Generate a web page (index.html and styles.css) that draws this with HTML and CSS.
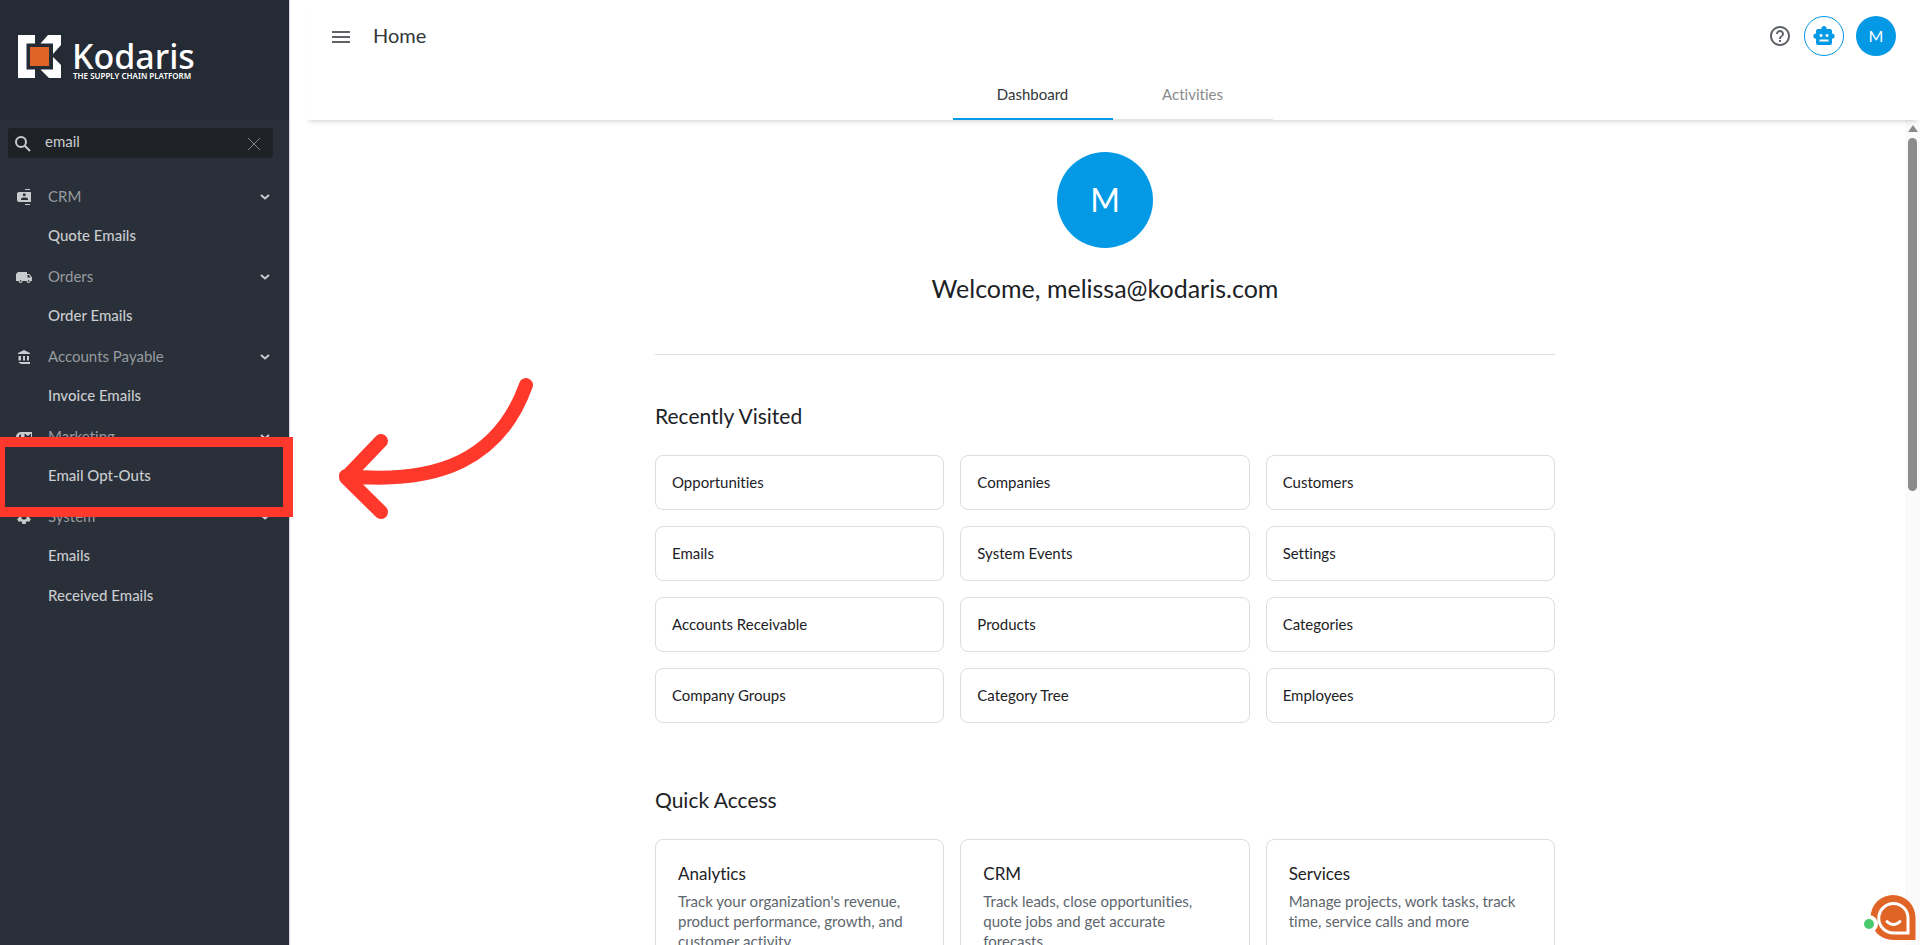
FILE: index.html
```
<!DOCTYPE html>
<html lang="en">
<head>
    <meta charset="UTF-8">
    <meta name="viewport" content="width=device-width, initial-scale=1.0">
    <title>Kodaris</title>
    <link rel="stylesheet" href="styles.css">
</head>
<body>
    <aside class="sidebar">
        <a href="#" class="logo" aria-label="Kodaris">
            <svg class="logo-mark" viewBox="0 0 43 43">
                <path fill="#fff" d="M0 0h17v8.500H8.500v26H17V43H0zM30 0h13v10l-8 9V8.500H22.500zM43 30v13H31L22.500 34.500H35V22z"/>
                <path fill="#df6426" d="M12 12h19v19H12z"/>
            </svg>
            <span class="logo-text">
                <span class="logo-name">Kodaris</span>
                <span class="logo-tag">THE SUPPLY CHAIN PLATFORM</span>
            </span>
        </a>

        <div class="search">
            <svg class="search-icon" viewBox="0 0 16 16"><circle cx="6" cy="6" r="5"/><path d="M9.500 9.500l5.500 5.500"/></svg>
            <input type="text" value="email" aria-label="Search menu">
            <button class="clear" aria-label="Clear"><svg viewBox="0 0 12 12"><path d="M0 0l12 12M12 0L0 12"/></svg></button>
        </div>

        <nav class="menu">
            <button class="group">
                <svg class="group-icon" viewBox="0 0 16 16"><path fill-rule="evenodd" d="M3 3h12v10H3a2 2 0 0 1-2-2V5a2 2 0 0 1 2-2zM7 4.500v2.500h2.500V4.500zM5 11h7V9.500L10 8.500H7L5 9.500zM9 0h5v1H9zM9 15h5v1H9z"/></svg>
                <span>CRM</span>
                <svg class="chevron" viewBox="0 0 8 6"><path d="M0 1l4 3.500L8 1"/></svg>
            </button>
            <a href="#" class="item">Quote Emails</a>

            <button class="group">
                <svg class="group-icon" viewBox="0 0 16 16"><path fill-rule="evenodd" d="M2 3h9v2h2.500L16 8.500V12h-1.500a2 2 0 0 1-4 0h-4a2 2 0 0 1-4 0H0V5zM11.500 6v2.500h3L13 6zM4.500 11.200a.8.8 0 1 0 .1 0zM12.500 11.200a.8.8 0 1 0 .1 0z"/></svg>
                <span>Orders</span>
                <svg class="chevron" viewBox="0 0 8 6"><path d="M0 1l4 3.500L8 1"/></svg>
            </button>
            <a href="#" class="item">Order Emails</a>

            <button class="group">
                <svg class="group-icon" viewBox="0 0 16 16"><path d="M8 1l6 3v1H2V4zM2.500 7H5v4.500H2.500zM7 7h2v4.500H7zM11 7h2v4.500h-2zM2 13h12v2H5z"/></svg>
                <span>Accounts Payable</span>
                <svg class="chevron" viewBox="0 0 8 6"><path d="M0 1l4 3.500L8 1"/></svg>
            </button>
            <a href="#" class="item">Invoice Emails</a>

            <button class="group">
                <svg class="group-icon" viewBox="0 0 16 16"><path fill-rule="evenodd" d="M5 3h11v10H3a3 3 0 0 1-3-3V8a5 5 0 0 1 5-5zM4.500 5L3 6.500V11h2V6.500zM8.500 4.500V10H15V4.500l-3 2.500z"/></svg>
                <span>Marketing</span>
                <svg class="chevron" viewBox="0 0 8 6"><path d="M0 1l4 3.500L8 1"/></svg>
            </button>
            <div class="marked">
                <a href="#" class="item">Email Opt-Outs</a>
                <div class="highlight"></div>
                <svg class="arrow" viewBox="330 370 210 150">
                    <path d="M526 385C500 458 440 485 346 476M381 441l-35 36.500l35 34.500"/>
                </svg>
            </div>

            <button class="group">
                <svg class="group-icon" viewBox="1 1 22 22"><path d="M19.140 12.940c.04-.3.060-.61.060-.94 0-.32-.02-.64-.07-.94l2.030-1.580a.49.49 0 0 0 .12-.61l-1.920-3.320a.49.49 0 0 0-.59-.22l-2.390.96c-.5-.38-1.030-.7-1.620-.94l-.36-2.540A.48.48 0 0 0 13.920 2.400h-3.840c-.24 0-.43.17-.47.41l-.36 2.540c-.59.24-1.130.57-1.620.94l-2.390-.96a.48.48 0 0 0-.59.22L2.740 8.870c-.12.210-.08.47.12.61l2.030 1.580c-.05.3-.09.63-.09.94s.02.640.07.94l-2.030 1.580a.49.49 0 0 0-.12.610l1.920 3.320c.12.220.37.290.59.220l2.390-.96c.5.380 1.030.7 1.620.94l.36 2.540c.05.240.24.410.48.410h3.840c.24 0 .44-.17.47-.41l.36-2.540c.59-.24 1.130-.56 1.620-.94l2.390.96c.22.080.47 0 .59-.22l1.920-3.320a.48.48 0 0 0-.12-.61zM12 15.600a3.600 3.600 0 1 1 0-7.200 3.600 3.600 0 0 1 0 7.200z"/></svg>
                <span>System</span>
                <svg class="chevron" viewBox="0 0 8 6"><path d="M0 1l4 3.500L8 1"/></svg>
            </button>
            <a href="#" class="item">Emails</a>
            <a href="#" class="item">Received Emails</a>
        </nav>
    </aside>

    <main class="main">
        <header class="header">
            <div class="topbar">
                <button class="burger" aria-label="Toggle menu"><svg viewBox="0 0 18 12"><path d="M0 0h18v2H0zM0 5h18v2H0zM0 10h18v2H0z"/></svg></button>
                <h1>Home</h1>
                <div class="actions">
                    <button class="help" aria-label="Help"><svg viewBox="0 0 24 24"><path d="M11 18h2v-2h-2v2zm1-16C6.480 2 2 6.480 2 12s4.480 10 10 10 10-4.480 10-10S17.520 2 12 2zm0 18c-4.410 0-8-3.590-8-8s3.590-8 8-8 8 3.590 8 8-3.590 8-8 8zm0-14c-2.210 0-4 1.790-4 4h2c0-1.100.9-2 2-2s2 .9 2 2c0 2-3 1.750-3 5h2c0-2.250 3-2.500 3-5 0-2.210-1.790-4-4-4z"/></svg></button>
                    <button class="bot" aria-label="Assistant"><svg viewBox="0 0 22 20"><path fill-rule="evenodd" d="M11 0a2.600 2.600 0 0 1 2.600 3H17a2 2 0 0 1 2 2v2.500a2.600 2.600 0 0 1 0 5.200V17a2 2 0 0 1-2 2H5a2 2 0 0 1-2-2v-4.300a2.600 2.600 0 0 1 0-5.200V5a2 2 0 0 1 2-2h3.400A2.600 2.600 0 0 1 11 0zM8 8a1.500 1.500 0 1 0 .1 0zM14 8a1.500 1.500 0 1 0 .1 0zM6.500 13.500v2h9v-2z"/></svg></button>
                    <button class="avatar">M</button>
                </div>
            </div>
            <nav class="tabs">
                <a href="#" class="tab active">Dashboard</a>
                <a href="#" class="tab">Activities</a>
            </nav>
        </header>

        <div class="body">
            <div class="content">
                <div class="page">
                    <section class="welcome">
                        <div class="avatar big">M</div>
                        <h2>Welcome, melissa@kodaris.com</h2>
                    </section>

                    <h3>Recently Visited</h3>
                    <div class="cards">
                        <a href="#" class="card">Opportunities</a>
                        <a href="#" class="card">Companies</a>
                        <a href="#" class="card">Customers</a>
                        <a href="#" class="card">Emails</a>
                        <a href="#" class="card">System Events</a>
                        <a href="#" class="card">Settings</a>
                        <a href="#" class="card">Accounts Receivable</a>
                        <a href="#" class="card">Products</a>
                        <a href="#" class="card">Categories</a>
                        <a href="#" class="card">Company Groups</a>
                        <a href="#" class="card">Category Tree</a>
                        <a href="#" class="card">Employees</a>
                    </div>

                    <h3 class="quick-title">Quick Access</h3>
                    <div class="cards">
                        <a href="#" class="card quick">
                            <h4>Analytics</h4>
                            <p>Track your organization's revenue, product performance, growth, and customer activity</p>
                        </a>
                        <a href="#" class="card quick">
                            <h4>CRM</h4>
                            <p>Track leads, close opportunities, quote jobs and get accurate forecasts</p>
                        </a>
                        <a href="#" class="card quick">
                            <h4>Services</h4>
                            <p>Manage projects, work tasks, track time, service calls and more</p>
                        </a>
                    </div>
                </div>
            </div>
            <div class="scrollbar">
                <span class="up"></span>
                <span class="thumb"></span>
            </div>
        </div>
    </main>

    <button class="chat" aria-label="Open chat">
        <svg viewBox="0 0 52 46">
            <path fill="#df6426" d="M29 0a22.500 22.500 0 0 1 22.500 22.500V45H29a22.500 22.500 0 0 1 0-45z"/>
            <circle cx="5" cy="29" r="9" fill="#fff"/>
            <path fill="none" stroke="#fff" stroke-width="3" d="M29.500 8.500a14.500 14.500 0 0 1 14.500 14.500V38H29.500a14.500 14.500 0 0 1 0-29.500z"/>
            <path fill="none" stroke="#fff" stroke-width="3" stroke-linecap="round" d="M23 26.500c4 4 9 4 13 0"/>
            <circle cx="5" cy="29" r="5" fill="#4bca6d"/>
        </svg>
    </button>
</body>
</html>
```

FILE: styles.css
```
* {
    box-sizing: border-box;
}

body {
    display: flex;
    height: 100vh;
    margin: 0;
    overflow: hidden;
    background: #fff;
    color: #1c2226;
    font-family: Lato, "Open Sans", sans-serif;
    font-size: 15px;
    font-variant-ligatures: none;
}

a {
    color: inherit;
    text-decoration: none;
}

button {
    padding: 0;
    border: 0;
    background: none;
    color: inherit;
    font: inherit;
    font-variant-ligatures: none;
    cursor: pointer;
}

svg {
    display: block;
}

h1, h2, h3, h4, p {
    margin: 0;
    font-weight: 400;
}

/* sidebar */
.sidebar {
    flex: 0 0 290px;
    border-right: 1px solid #d5d7dc;
    background: #2a3039;
    color: #c9cbce;
}

.logo {
    display: flex;
    gap: 11px;
    height: 120px;
    padding: 35px 18px;
    background: #252b34;
    color: #fff;
}

.logo-mark {
    width: 43px;
    height: 43px;
}

.logo-text {
    display: flex;
    flex-direction: column;
    font-family: "Noto Sans", sans-serif;
}

.logo-name {
    padding-top: 5px;
    font-size: 34px;
    line-height: 32px;
    font-weight: 500;
}

.logo-tag {
    padding-left: 1px;
    font-size: 8px;
    line-height: 8px;
    font-weight: 600;
}

.search {
    display: flex;
    align-items: center;
    height: 30px;
    margin: 8px 16px 18px 8px;
    padding: 2px 13px 0 7px;
    border-radius: 3px;
    background: #1e2227;
}

.search-icon {
    width: 16px;
    height: 16px;
    fill: none;
    stroke: #c9cbce;
    stroke-width: 2;
}

.search input {
    flex: 1;
    min-width: 0;
    height: 28px;
    padding: 0 0 6px;
    margin-left: 14px;
    border: 0;
    outline: 0;
    background: none;
    color: #c9cbce;
    font: inherit;
}

.clear svg {
    width: 12px;
    height: 12px;
    overflow: visible;
    fill: none;
    stroke: #7d8287;
    stroke-width: 1;
}

.group,
.item {
    display: flex;
    align-items: center;
    width: 100%;
    height: 40px;
}

.group {
    padding: 1px 20px 0 16px;
    color: #989b9f;
    text-align: left;
}

.group span {
    flex: 1;
    padding-bottom: 2px;
}

.group-icon {
    width: 16px;
    height: 16px;
    margin-right: 16px;
    fill: #c9cbce;
}

.chevron {
    width: 8px;
    height: 6px;
    overflow: visible;
    fill: none;
    stroke: #c9cbce;
    stroke-width: 2;
}

.item {
    padding: 0 0 2px 48px;
    font-weight: 500;
}

.marked {
    position: relative;
    z-index: 5;
}

/* callout drawn over the menu row */
.highlight {
    position: absolute;
    top: -19px;
    right: -4px;
    bottom: -21px;
    left: -5px;
    border: 10px solid #ff382c;
    pointer-events: none;
}

.arrow {
    position: absolute;
    top: -86px;
    left: 330px;
    width: 210px;
    height: 150px;
    fill: none;
    stroke: #ff382c;
    stroke-width: 14;
    stroke-linecap: round;
    stroke-linejoin: round;
    pointer-events: none;
}

/* main column */
.main {
    display: flex;
    flex: 1;
    flex-direction: column;
    min-width: 0;
    margin-left: 15px;
}

.header {
    position: relative;
    flex: none;
    box-shadow: 0 5px 5px -4px rgba(0, 0, 0, 0.2);
}

.topbar {
    display: flex;
    align-items: center;
    height: 72px;
    padding: 0 24px 0 27px;
}

.burger {
    padding-top: 2px;
}

.burger svg {
    width: 18px;
    height: 12px;
    fill: #5f6368;
}

h1 {
    margin-left: 23px;
    padding-bottom: 2px;
    color: #333538;
    font-size: 20px;
}

.actions {
    display: flex;
    align-items: center;
    gap: 12px;
    margin-left: auto;
}

.help svg {
    width: 24px;
    height: 24px;
    fill: #5f6368;
}

.bot {
    display: flex;
    align-items: center;
    justify-content: center;
    width: 40px;
    height: 40px;
    border: 1px solid #0399e5;
    border-radius: 50%;
}

.bot svg {
    width: 22px;
    height: 20px;
    fill: #0399e5;
}

.avatar {
    display: flex;
    align-items: center;
    justify-content: center;
    width: 40px;
    height: 40px;
    padding-bottom: 2px;
    border-radius: 50%;
    background: #0399e5;
    color: #fff;
    font-size: 16px;
}

.big {
    width: 96px;
    height: 96px;
    font-size: 32px;
}

.tabs {
    display: flex;
    justify-content: center;
}

.tab {
    width: 160px;
    height: 48px;
    border-bottom: 1px solid #e4e4e4;
    color: #8a8a8a;
    line-height: 44px;
    text-align: center;
}

.active {
    border-bottom: 2px solid #0399e5;
    color: #333538;
}

.body {
    display: flex;
    flex: 1;
    min-height: 0;
}

.content {
    flex: 1;
    overflow: hidden;
}

.page {
    max-width: 900px;
    margin: 0 auto;
    padding-top: 32px;
}

.welcome {
    display: flex;
    flex-direction: column;
    align-items: center;
    gap: 24px;
    margin-bottom: 48px;
    padding-bottom: 50px;
    border-bottom: 1px solid #dcdddf;
}

h2 {
    font-size: 25px;
    line-height: 32px;
}

h3 {
    margin-bottom: 26px;
    font-size: 21px;
    line-height: 26px;
}

.quick-title {
    margin-top: 64px;
}

.cards {
    display: grid;
    grid-template-columns: repeat(3, 1fr);
    gap: 16px;
}

.card {
    padding: 16px;
    border: 1px solid #dcdddf;
    border-radius: 8px;
    line-height: 21px;
}

.quick {
    min-height: 160px;
    padding: 22px;
}

h4 {
    margin-bottom: 5px;
    font-size: 17px;
    line-height: 24px;
}

.quick p {
    color: #5d666d;
    line-height: 20px;
}

/* scrollbar */
.scrollbar {
    display: flex;
    flex-direction: column;
    align-items: center;
    gap: 6px;
    width: 15px;
    padding-top: 5px;
    background: #fafafa;
}

.up {
    border: 5px solid transparent;
    border-top: 0;
    border-bottom: 7px solid #8b8b8b;
}

.thumb {
    width: 9px;
    height: 43%;
    border-radius: 5px;
    background: #8b8b8b;
}

.chat {
    position: fixed;
    right: 4px;
    bottom: 4px;
}

.chat svg {
    width: 52px;
    height: 46px;
}
```
